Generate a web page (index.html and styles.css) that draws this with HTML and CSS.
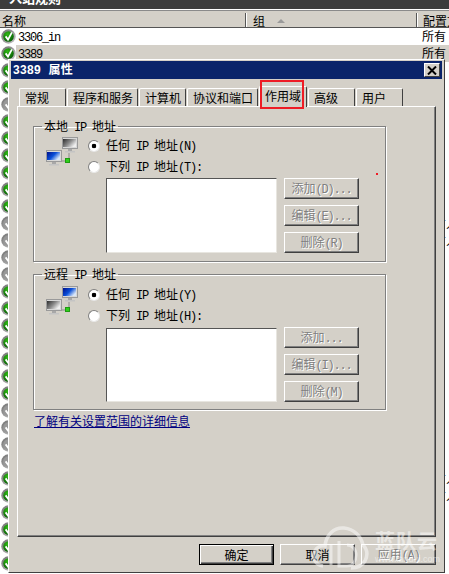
FILE: index.html
```html
<!DOCTYPE html>
<html lang="zh-CN">
<head>
  <meta charset="UTF-8">
  <title>3389 属性</title>
  <link rel="stylesheet" href="styles.css">
</head>
<body>

  <svg class="sprite" width="0" height="0" aria-hidden="true">
    <defs>
      <linearGradient id="screenBlue" x1="0" y1="0" x2="1" y2="0.6">
        <stop offset="0" stop-color="#00108c"/>
        <stop offset="0.55" stop-color="#0a4fd8"/>
        <stop offset="1" stop-color="#d8e6f8"/>
      </linearGradient>
      <linearGradient id="screenGrey" x1="0" y1="0" x2="1" y2="0.6">
        <stop offset="0" stop-color="#2c2c2c"/>
        <stop offset="0.55" stop-color="#8a8a8a"/>
        <stop offset="1" stop-color="#eeeeee"/>
      </linearGradient>
      <radialGradient id="ballGreen" cx="0.4" cy="0.3" r="0.75">
        <stop offset="0" stop-color="#2fb814"/>
        <stop offset="1" stop-color="#075a06"/>
      </radialGradient>
      <linearGradient id="ringGrey" x1="0" y1="0" x2="1" y2="1">
        <stop offset="0" stop-color="#6e6e6e"/>
        <stop offset="1" stop-color="#c8c8c8"/>
      </linearGradient>
      <symbol id="ok" viewBox="0 0 15 15">
        <circle cx="7.5" cy="7.5" r="7.2" fill="url(#ringGrey)"/>
        <circle cx="7.5" cy="7.5" r="5.3" fill="url(#ballGreen)"/>
        <path d="M4.6 7.4 7 10.6 10.9 3.4" fill="none" stroke="#fff" stroke-width="1.8"/>
      </symbol>
      <symbol id="off" viewBox="0 0 15 15">
        <circle cx="7.5" cy="7.5" r="7.2" fill="url(#ringGrey)"/>
        <circle cx="7.5" cy="7.5" r="5.3" fill="#989898"/>
        <path d="M4.6 7.4 7 10.6 10.9 3.4" fill="none" stroke="#fff" stroke-width="1.8"/>
      </symbol>
      <symbol id="monitor" viewBox="0 0 16 16">
        <rect x="0.5" y="0.5" width="15" height="11" fill="#d8d8d8" stroke="#9a9a9a"/>
        <path d="M6 12h4v2H6z" fill="#a8a8a8"/>
        <path d="M3 14h10v1.5H3z" fill="#c4c4c4"/>
      </symbol>
    </defs>
  </svg>

  <div class="topbar"><span class="topbar-title">入站规则</span></div>
  <div class="topbar-rule"></div>

  <div class="list-head">
    <div class="head-cell col-name">名称</div>
    <div class="head-cell col-group">组<span class="sort-arrow"></span></div>
    <div class="head-cell col-config">配置文件</div>
  </div>

  <div class="rows">
    <div class="row"><svg class="st"><use href="#ok"/></svg><span class="name"><span class="lat">3306_in</span></span><span class="cfg">所有</span></div>
    <div class="row row-sel"><svg class="st"><use href="#ok"/></svg><span class="name"><span class="lat">3389</span></span><span class="cfg">所有</span></div>
    <div class="row"><svg class="st"><use href="#ok"/></svg></div>
    <div class="row"><svg class="st"><use href="#ok"/></svg></div>
    <div class="row"><svg class="st"><use href="#off"/></svg></div>
    <div class="row"><svg class="st"><use href="#ok"/></svg></div>
    <div class="row"><svg class="st"><use href="#ok"/></svg></div>
    <div class="row"><svg class="st"><use href="#ok"/></svg></div>
    <div class="row"><svg class="st"><use href="#ok"/></svg></div>
    <div class="row"><svg class="st"><use href="#ok"/></svg></div>
    <div class="row"><svg class="st"><use href="#ok"/></svg></div>
    <div class="row"><svg class="st"><use href="#off"/></svg><span class="cfg cfg-far">所有人</span></div>
    <div class="row"><svg class="st"><use href="#off"/></svg><span class="cfg cfg-far">所有人</span></div>
    <div class="row"><svg class="st"><use href="#off"/></svg></div>
    <div class="row"><svg class="st"><use href="#off"/></svg></div>
    <div class="row"><svg class="st"><use href="#ok"/></svg></div>
    <div class="row"><svg class="st"><use href="#ok"/></svg></div>
    <div class="row"><svg class="st"><use href="#ok"/></svg></div>
    <div class="row"><svg class="st"><use href="#ok"/></svg></div>
    <div class="row"><svg class="st"><use href="#ok"/></svg></div>
    <div class="row"><svg class="st"><use href="#ok"/></svg></div>
    <div class="row"><svg class="st"><use href="#ok"/></svg></div>
    <div class="row"><svg class="st"><use href="#off"/></svg></div>
    <div class="row"><svg class="st"><use href="#off"/></svg></div>
    <div class="row"><svg class="st"><use href="#off"/></svg></div>
    <div class="row"><svg class="st"><use href="#off"/></svg></div>
    <div class="row"><svg class="st"><use href="#ok"/></svg><span class="cfg cfg-far">所有人</span></div>
    <div class="row"><svg class="st"><use href="#ok"/></svg><span class="cfg cfg-far">所有人</span></div>
    <div class="row"><svg class="st"><use href="#ok"/></svg></div>
    <div class="row"><svg class="st"><use href="#ok"/></svg></div>
    <div class="row"><svg class="st"><use href="#ok"/></svg></div>
    <div class="row"><svg class="st"><use href="#ok"/></svg></div>
  </div>

  <div class="dialog">
    <div class="titlebar">
      <span class="title-text">3389 属性</span>
      <button class="close-btn" aria-label="关闭">
        <svg width="10" height="9" viewBox="0 0 10 9"><path d="M1 0.5 9 8.5M9 0.5 1 8.5" stroke="#000" stroke-width="2"/></svg>
      </button>
    </div>

    <div class="tabs">
      <div class="tab">常规</div>
      <div class="tab">程序和服务</div>
      <div class="tab">计算机</div>
      <div class="tab">协议和端口</div>
      <div class="tab tab-active">作用域<span class="red-box"></span></div>
      <div class="tab">高级</div>
      <div class="tab">用户</div>
    </div>

    <div class="panel">
      <fieldset class="group group-local">
        <legend>本地 <span class="lat">IP</span> 地址</legend>
        <div class="group-top">
          <svg class="net-icon" width="34" height="30" viewBox="0 0 34 30">
            <use href="#monitor" x="17" y="0" width="16" height="16"/>
            <rect x="18" y="2" width="13" height="8" fill="url(#screenGrey)"/>
            <use href="#monitor" x="1" y="13" width="16" height="16"/>
            <rect x="2" y="15" width="13" height="8" fill="url(#screenBlue)"/>
            <path d="M24 16v6M17 24h4" stroke="#8c8c8c" fill="none"/>
            <rect x="20.5" y="21.5" width="4" height="4" fill="#2ed01a" stroke="#1f9a12"/>
          </svg>
          <div class="radios">
            <label class="radio"><input type="radio" name="local" checked><span>任何 <span class="lat">IP</span> 地址<span class="lat">(N)</span></span></label>
            <label class="radio"><input type="radio" name="local"><span>下列 <span class="lat">IP</span> 地址<span class="lat">(T):</span></span></label>
          </div>
        </div>
        <div class="group-body">
          <div class="listbox"></div>
          <div class="side-btns">
            <button class="btn" disabled>添加<span class="lat">(D)...</span></button>
            <button class="btn" disabled>编辑<span class="lat">(E)...</span></button>
            <button class="btn" disabled>删除<span class="lat">(R)</span></button>
          </div>
        </div>
      </fieldset>

      <fieldset class="group group-remote">
        <legend>远程 <span class="lat">IP</span> 地址</legend>
        <div class="group-top">
          <svg class="net-icon" width="34" height="30" viewBox="0 0 34 30">
            <use href="#monitor" x="17" y="0" width="16" height="16"/>
            <rect x="18" y="2" width="13" height="8" fill="url(#screenBlue)"/>
            <use href="#monitor" x="1" y="13" width="16" height="16"/>
            <rect x="2" y="15" width="13" height="8" fill="url(#screenGrey)"/>
            <path d="M24 16v6M17 24h4" stroke="#8c8c8c" fill="none"/>
            <rect x="20.5" y="21.5" width="4" height="4" fill="#2ed01a" stroke="#1f9a12"/>
          </svg>
          <div class="radios">
            <label class="radio"><input type="radio" name="remote" checked><span>任何 <span class="lat">IP</span> 地址<span class="lat">(Y)</span></span></label>
            <label class="radio"><input type="radio" name="remote"><span>下列 <span class="lat">IP</span> 地址<span class="lat">(H):</span></span></label>
          </div>
        </div>
        <div class="group-body">
          <div class="listbox"></div>
          <div class="side-btns">
            <button class="btn" disabled>添加<span class="lat">...</span></button>
            <button class="btn" disabled>编辑<span class="lat">(I)...</span></button>
            <button class="btn" disabled>删除<span class="lat">(M)</span></button>
          </div>
        </div>
      </fieldset>

      <a class="help-link" href="#">了解有关设置范围的详细信息</a>
    </div>

    <div class="footer">
      <button class="btn btn-default">确定</button>
      <button class="btn">取消</button>
      <button class="btn" disabled>应用<span class="lat">(A)</span></button>
    </div>

    <span class="red-dot"></span>
  </div>

  <!-- site watermark sits on top of everything -->
  <div class="watermark">
    <svg width="58" height="46" viewBox="0 0 58 46">
      <path d="M12 41C4 40 2 33 3 29 4 23 9 20 14 21 15 10 23 2 33 3 43 4 50 11 52 20 56 24 57 30 54 36 51 41 46 43 40 43" fill="none" stroke="#fff" stroke-width="3.5"/>
      <path d="M28 16V41H36C42 41 45 36 45 30 45 24 41 20 36 20" fill="none" stroke="#fff" stroke-width="3"/>
      <path d="M20 19V40" fill="none" stroke="#fff" stroke-width="3"/>
    </svg>
    <div class="wm-text">
      <span class="wm-name">蓝队云</span>
      <span class="wm-url">www.landui.com</span>
    </div>
  </div>

</body>
</html>
```

FILE: styles.css
```css
* {
  box-sizing: border-box;
}

body {
  margin: 0;
  width: 449px;
  height: 574px;
  overflow: hidden;
  position: relative;
  background-color: #fff;
  color: #000;
  font-family: "Noto Sans CJK SC", sans-serif;
  font-size: 12px;
  line-height: 14px;
}

.sprite {
  position: absolute;
}

/* half width latin, like the old bitmap UI font */
.lat {
  font-family: "Liberation Mono", monospace;
  font-size: 12px;
  line-height: 1;
  letter-spacing: -1.2px;
}

/* window behind the dialog */
.topbar {
  height: 9px;
  background-color: #3c3c3c;
  position: relative;
  overflow: hidden;
}

.topbar-title {
  position: absolute;
  left: 9px;
  top: -12px;
  font-size: 13px;
  line-height: 20px;
  font-weight: bold;
  color: #fff;
}

.topbar-rule {
  height: 4px;
  background-color: #d4d0c8;
  border-top: 1px solid #fff;
  box-shadow: inset 0 1px 0 #8a8a8a;
}

.list-head {
  display: flex;
  height: 15px;
  background-color: #d4d0c8;
  border-bottom: 1px solid #555;
}

.head-cell {
  height: 14px;
  padding: 1px 0 0 2px;
  font-size: 12px;
  line-height: 14px;
  border-right: 1px solid #555;
  overflow: hidden;
  white-space: nowrap;
}

.col-name {
  width: 246px;
}

.col-group {
  width: 171px;
  padding-left: 6px;
  border-left: 1px solid #fff;
  display: flex;
  align-items: center;
}

.col-config {
  flex: 1;
  padding-left: 5px;
  border-left: 1px solid #fff;
  border-right: none;
}

.sort-arrow {
  margin-left: 12px;
  border-left: 4px solid transparent;
  border-right: 4px solid transparent;
  border-bottom: 4px solid #9a9a9a;
}

.row {
  display: flex;
  align-items: center;
  height: 17px;
  position: relative;
}

.st {
  width: 15px;
  height: 15px;
  margin-left: 1px;
  flex: none;
}

.name {
  flex: 1;
  height: 100%;
  padding-left: 2px;
  line-height: 16px;
}

.row-sel .name {
  background-color: #d4d0c8;
}

.cfg {
  position: absolute;
  left: 422px;
  top: 1px;
  white-space: nowrap;
}

.cfg-far {
  top: 2px;
}

/* properties dialog */
.dialog {
  position: absolute;
  left: 8px;
  top: 59px;
  width: 437px;
  height: 514px;
  padding: 1px 2px 0 2px;
  background-color: #d4d0c8;
  border-top: 1px solid #fff;
  border-left: 1px solid #fff;
  border-right: 1px solid #404040;
  border-bottom: 1px solid #404040;
}

.titlebar {
  display: flex;
  align-items: center;
  justify-content: space-between;
  height: 18px;
  padding: 0 2px 0 2px;
  background-color: #0a246a;
  color: #fff;
}

.title-text {
  font-family: "Liberation Sans", "Noto Sans CJK SC", sans-serif;
  font-size: 12px;
  font-weight: bold;
  letter-spacing: 0.3px;
  word-spacing: 4px;
}

.close-btn {
  display: flex;
  align-items: center;
  justify-content: center;
  width: 16px;
  height: 14px;
  padding: 0;
  background-color: #d4d0c8;
  border: 1px solid;
  border-color: #fff #404040 #404040 #fff;
}

.tabs {
  display: flex;
  align-items: flex-end;
  gap: 1px;
  height: 28px;
  margin-left: 8px;
  position: relative;
  z-index: 1;
  margin-bottom: -1px;
}

.tab {
  height: 18px;
  min-width: 47px;
  padding: 2px 4px 0 5px;
  margin-bottom: 1px;
  background-color: #d4d0c8;
  border: 1px solid;
  border-color: #fff #404040 transparent #fff;
  border-bottom: none;
  border-radius: 2px 2px 0 0;
  white-space: nowrap;
}

.tab-active {
  position: relative;
  height: 21px;
  min-width: 48px;
  margin-bottom: 0;
  padding-top: 2px;
}

/* the red annotation round the active tab */
.red-box {
  position: absolute;
  left: 0;
  top: -7px;
  width: 44px;
  height: 29px;
  border: 2px solid #ee1c25;
}

.panel {
  width: 419px;
  height: 431px;
  margin-left: 6px;
  padding: 12px 0 0 15px;
  background-color: #d4d0c8;
  border: 1px solid;
  border-color: #fff #404040 #404040 #fff;
  box-shadow: inset -1px -1px 0 #808080;
}

.group {
  width: 353px;
  height: 143px;
  min-width: 0;
  margin: 0 0 5px 0;
  padding: 2px 0 0 0;
  border: 1px solid #808080;
  box-shadow: inset 1px 1px 0 #fff, 1px 1px 0 #fff;
}

.group-remote {
  padding-top: 3px;
}

.group legend {
  height: 14px;
  margin-left: 8px;
  padding: 0 2px;
  line-height: 14px;
  word-spacing: 3.3px;
}

.group-top {
  display: flex;
  align-items: flex-start;
  height: 42px;
}

.net-icon {
  margin: 2px 0 0 11px;
  flex: none;
}

.radios {
  margin-left: 9px;
}

.radio {
  display: flex;
  align-items: center;
  gap: 6px;
  height: 21px;
  white-space: pre;
  word-spacing: 3.3px;
}

.radio input {
  appearance: none;
  width: 12px;
  height: 12px;
  margin: 0;
  flex: none;
  border-radius: 50%;
  background-color: #fff;
  border: 1px solid;
  border-color: #808080 #e8e8e8 #e8e8e8 #808080;
}

.radio input:checked {
  background: radial-gradient(circle, #000 2px, #fff 2.6px);
}

.group-body {
  display: flex;
  gap: 7px;
  margin: 1px 0 0 72px;
}

.group-remote .listbox {
  margin-top: 1px;
  height: 74px;
}

.listbox {
  width: 171px;
  height: 75px;
  background-color: #fff;
  border: 1px solid;
  border-color: #555 #e8e6e0 #e8e6e0 #555;
}

.side-btns {
  display: flex;
  flex-direction: column;
  gap: 6px;
}

.btn {
  width: 75px;
  height: 21px;
  padding: 0;
  font-family: inherit;
  font-size: 12px;
  line-height: 14px;
  color: #000;
  background-color: #d4d0c8;
  border: 1px solid;
  border-color: #fff #404040 #404040 #fff;
  box-shadow: inset -1px -1px 0 #808080;
  white-space: nowrap;
}

.btn:disabled {
  color: #808080;
  text-shadow: 1px 1px 0 #fff;
}

.btn-default {
  border: 1px solid #000;
  box-shadow: inset 1px 1px 0 #fff, inset -1px -1px 0 #404040, inset -2px -2px 0 #808080;
}

.help-link {
  display: block;
  width: max-content;
  margin: -1px 0 0 1px;
  color: #000080;
  font-size: 12px;
}

.footer {
  display: flex;
  justify-content: flex-end;
  gap: 6px;
  width: 425px;
  margin-top: 7px;
}

.red-dot {
  position: absolute;
  left: 367px;
  top: 113px;
  width: 2px;
  height: 2px;
  background-color: #ee1c25;
}

.watermark {
  position: absolute;
  left: 311px;
  top: 525px;
  display: flex;
  gap: 6px;
  opacity: 0.5;
  pointer-events: none;
}

.wm-text {
  display: flex;
  flex-direction: column;
  color: #fff;
  padding-top: 5px;
}

.wm-name {
  font-size: 20px;
  line-height: 22px;
  font-weight: bold;
  letter-spacing: 1px;
}

.wm-url {
  font-family: "Liberation Sans", sans-serif;
  font-size: 9px;
  line-height: 10px;
  margin-top: 2px;
}
```
